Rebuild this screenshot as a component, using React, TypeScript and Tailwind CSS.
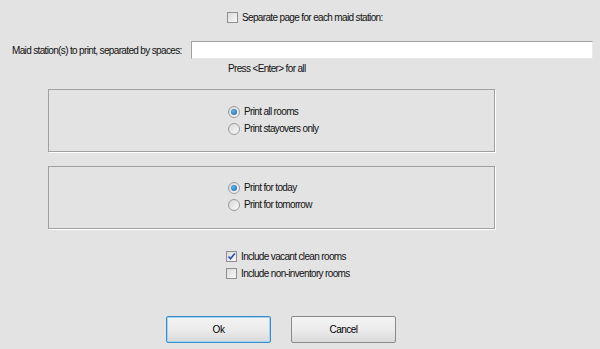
import React from 'react';

const Check = ({ checked }: { checked?: boolean }) => (
  <span className="w-[11px] h-[11px] border border-[#8f8f8f] bg-gradient-to-br from-[#dcdcdc] to-[#f8f8f8] flex items-center justify-center mr-[4px] shrink-0">
    {checked && (
      <svg width="9" height="9" viewBox="0 0 9 9">
        <path d="M1.5 4.5 L3.5 6.8 L7.8 1.5" fill="none" stroke="#2a4bb8" strokeWidth="1.6" />
      </svg>
    )}
  </span>
);

const Radio = ({ checked }: { checked?: boolean }) => (
  <span className="w-[12px] h-[12px] rounded-full border border-[#9a9a9a] bg-gradient-to-br from-[#d8d8d8] to-[#fafafa] flex items-center justify-center mr-[4px] shrink-0">
    {checked && <span className="w-[6px] h-[6px] rounded-full bg-[radial-gradient(circle_at_40%_40%,#5fb6f0,#0b5fa5)]" />}
  </span>
);

const Button = ({ label, focused }: { label: string; focused?: boolean }) => (
  <button
    className={
      'w-[105px] h-[27px] rounded-[2px] border bg-gradient-to-b from-[#f3f3f3] via-[#ececec] to-[#d9d9d9] text-[10px] tracking-[-0.5px] text-black ' +
      (focused ? 'border-[#3c8ccb] shadow-[inset_0_0_0_1px_#9fd4f5]' : 'border-[#8a8a8a]')
    }
  >
    {label}
  </button>
);

const App = () => {
  return (
    <div
      className="w-[600px] h-[349px] bg-[#e3e3e3] text-[10px] tracking-[-0.65px] text-[#111] pt-[6px] overflow-hidden"
      style={{ fontFamily: '"Liberation Sans", Arial, sans-serif' }}
    >
      <div className="h-[22px] flex items-center pl-[227px]">
        <Check />
        <span>Separate page for each maid station:</span>
      </div>

      <div className="mt-[13px] flex items-center h-[18px]">
        <span className="w-[183px] pl-[12px] whitespace-nowrap">Maid station(s) to print, separated by spaces:</span>
        <input className="ml-[8px] w-[402px] h-[18px] bg-white border border-[#a0a0a0] border-b-[#e8e8e8] border-r-[#e8e8e8] outline-none" />
      </div>

      <div className="mt-[2px] h-[14px] flex items-center pl-[228px]">Press &lt;Enter&gt; for all</div>

      <div className="mt-[14px] ml-[48px] w-[447px] h-[63px] border border-[#a0a0a0] shadow-[1px_1px_0_#fff] pt-[13px] pl-[179px]">
        <div className="h-[17px] flex items-center">
          <Radio checked />
          <span>Print all rooms</span>
        </div>
        <div className="h-[17px] flex items-center">
          <Radio />
          <span>Print stayovers only</span>
        </div>
      </div>

      <div className="mt-[14px] ml-[48px] w-[447px] h-[63px] border border-[#a0a0a0] shadow-[1px_1px_0_#fff] pt-[12px] pl-[179px]">
        <div className="h-[17px] flex items-center">
          <Radio checked />
          <span>Print for today</span>
        </div>
        <div className="h-[17px] flex items-center">
          <Radio />
          <span>Print for tomorrow</span>
        </div>
      </div>

      <div className="mt-[19px] pl-[226px]">
        <div className="h-[17px] flex items-center">
          <Check checked />
          <span>Include vacant clean rooms</span>
        </div>
        <div className="h-[17px] flex items-center">
          <Check />
          <span>Include non-inventory rooms</span>
        </div>
      </div>

      <div className="mt-[34px] flex pl-[166px] gap-[20px]">
        <Button label="Ok" focused />
        <Button label="Cancel" />
      </div>
    </div>
  );
};

export default App;
